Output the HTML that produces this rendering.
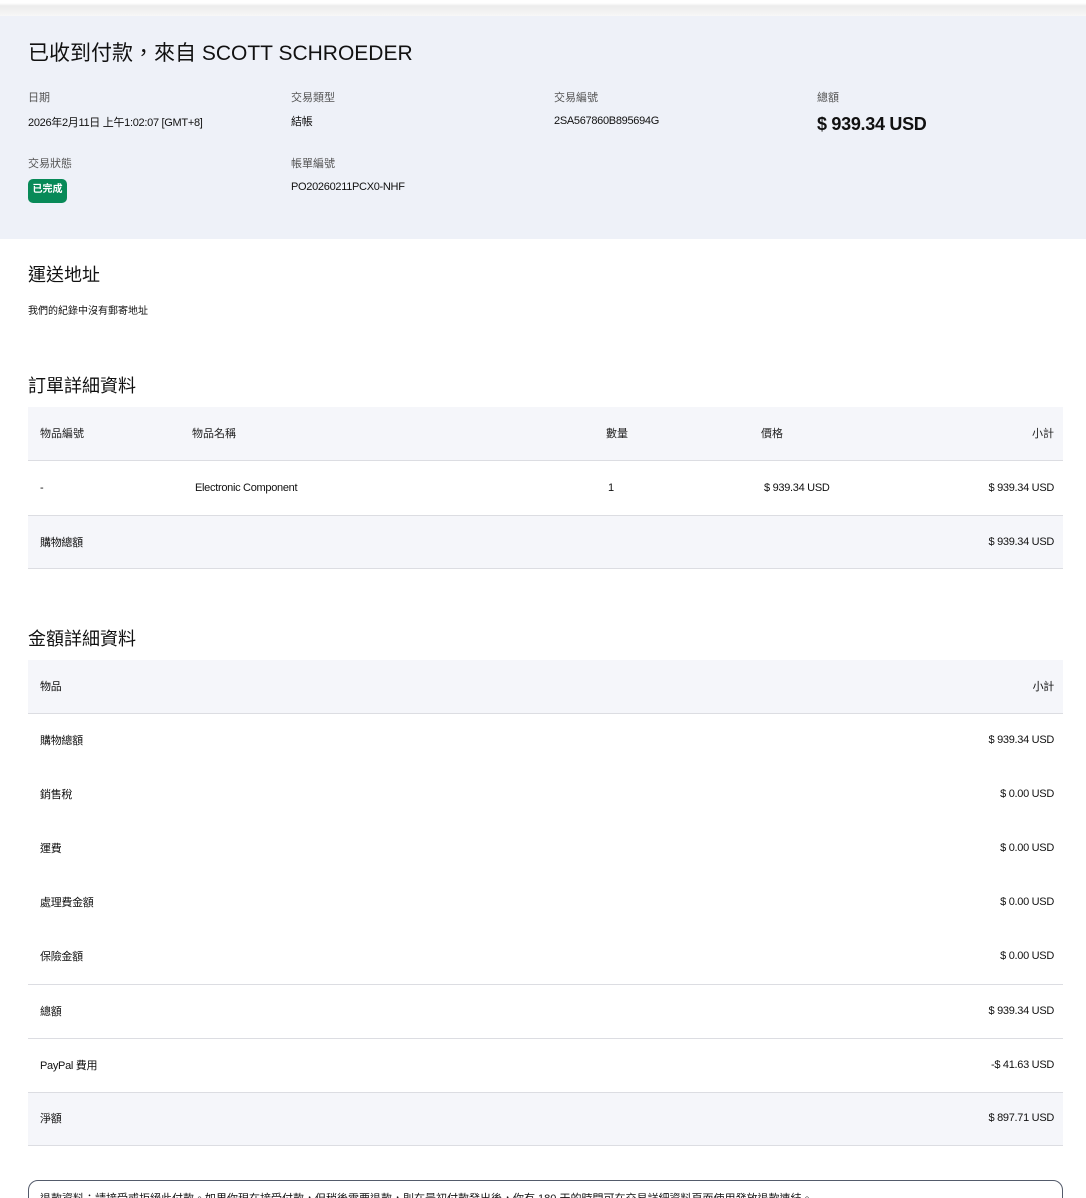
<!DOCTYPE html>
<html style="overflow:hidden;height:1198px"><head><meta charset="utf-8"><style>
*{margin:0;padding:0;box-sizing:border-box}
body{width:1086px;height:1198px;overflow:hidden;background:#fff;font-family:"Liberation Sans","Noto Sans CJK TC",sans-serif;color:#111;position:relative}
.a{position:absolute;white-space:nowrap}
.s{font-size:11px;letter-spacing:-0.3px}
.l{color:#555;font-size:11px}
.bg{position:absolute;background:#f5f6fa}
.ln{position:absolute;left:28px;width:1035px;height:1px;background:#dcdde2}
.r{right:32px;text-align:right}
</style></head><body>
<div style="position:absolute;left:0;top:0;width:1086px;height:16px;background:linear-gradient(#fff,#fff 3px,#ececec 6px,#f7f7f7 16px)"></div>
<div style="position:absolute;left:0;top:16px;width:1086px;height:223px;background:#eef1f8"></div>
<div class="a" style="left:28px;top:37px;font-size:21px">已收到付款，來自 SCOTT SCHROEDER</div>
<div class="a l" style="left:28px;top:89px">日期</div>
<div class="a s" style="left:28px;top:114px">2026年2月11日 上午1:02:07 [GMT+8]</div>
<div class="a l" style="left:291px;top:89px">交易類型</div>
<div class="a s" style="left:291px;top:113px">結帳</div>
<div class="a l" style="left:554px;top:89px">交易編號</div>
<div class="a s" style="left:554px;top:115px">2SA567860B895694G</div>
<div class="a l" style="left:817px;top:89px">總額</div>
<div class="a" style="left:817px;top:114px;font-size:18px;font-weight:bold;letter-spacing:-0.3px">$ 939.34 USD</div>
<div class="a l" style="left:28px;top:155px">交易狀態</div>
<div class="a" style="left:28px;top:179px;width:39px;height:24px;border-radius:5px;background:#088a58;color:#fff;font-size:10px;line-height:22px;text-align:center;font-weight:bold">已完成</div>
<div class="a l" style="left:291px;top:155px">帳單編號</div>
<div class="a s" style="left:291px;top:181px">PO20260211PCX0-NHF</div>

<div class="a" style="left:28px;top:261px;font-size:18px">運送地址</div>
<div class="a" style="left:28px;top:302px;font-size:10px">我們的紀錄中沒有郵寄地址</div>

<div class="a" style="left:28px;top:372px;font-size:18px">訂單詳細資料</div>
<div class="bg" style="left:28px;top:407px;width:1035px;height:53px"></div>
<div class="ln" style="top:460px"></div>
<div class="bg" style="left:28px;top:516px;width:1035px;height:52px"></div>
<div class="ln" style="top:515px"></div>
<div class="ln" style="top:568px"></div>
<div class="a l" style="left:40px;top:425px;color:#222">物品編號</div>
<div class="a l" style="left:192px;top:425px;color:#222">物品名稱</div>
<div class="a l" style="left:606px;top:425px;color:#222">數量</div>
<div class="a l" style="left:761px;top:425px;color:#222">價格</div>
<div class="a l r" style="top:425px;color:#222">小計</div>
<div class="a s" style="left:40px;top:482px">-</div>
<div class="a s" style="left:195px;top:482px">Electronic Component</div>
<div class="a s" style="left:608px;top:482px">1</div>
<div class="a s" style="left:764px;top:482px">$ 939.34 USD</div>
<div class="a s r" style="top:482px">$ 939.34 USD</div>
<div class="a s" style="left:40px;top:534px">購物總額</div>
<div class="a s r" style="top:536px">$ 939.34 USD</div>

<div class="a" style="left:28px;top:625px;font-size:18px">金額詳細資料</div>
<div class="bg" style="left:28px;top:660px;width:1035px;height:53px"></div>
<div class="ln" style="top:713px"></div>
<div class="a s" style="left:40px;top:678px">物品</div>
<div class="a s r" style="top:678px">小計</div>
<div class="a s" style="left:40px;top:732px">購物總額</div><div class="a s r" style="top:734px">$ 939.34 USD</div>
<div class="a s" style="left:40px;top:786px">銷售稅</div><div class="a s r" style="top:788px">$ 0.00 USD</div>
<div class="a s" style="left:40px;top:840px">運費</div><div class="a s r" style="top:842px">$ 0.00 USD</div>
<div class="a s" style="left:40px;top:894px">處理費金額</div><div class="a s r" style="top:896px">$ 0.00 USD</div>
<div class="a s" style="left:40px;top:948px">保險金額</div><div class="a s r" style="top:950px">$ 0.00 USD</div>
<div class="ln" style="top:984px"></div>
<div class="a s" style="left:40px;top:1003px">總額</div><div class="a s r" style="top:1005px">$ 939.34 USD</div>
<div class="ln" style="top:1038px"></div>
<div class="a s" style="left:40px;top:1057px">PayPal 費用</div><div class="a s r" style="top:1059px">-$ 41.63 USD</div>
<div class="bg" style="left:28px;top:1092px;width:1035px;height:53px"></div>
<div class="ln" style="top:1092px"></div>
<div class="ln" style="top:1145px"></div>
<div class="a s" style="left:40px;top:1110px">淨額</div><div class="a s r" style="top:1112px">$ 897.71 USD</div>

<div style="position:absolute;left:28px;top:1180px;width:1035px;height:60px;border:1px solid #545b6b;border-radius:10px"></div>
<div class="a" style="left:40px;top:1190px;font-size:11px">退款資料：請接受或拒絕此付款。如果你現在接受付款，但稍後需要退款，則在最初付款發出後，你有 180 天的時間可在交易詳細資料頁面使用發放退款連結。</div>
</body></html>
